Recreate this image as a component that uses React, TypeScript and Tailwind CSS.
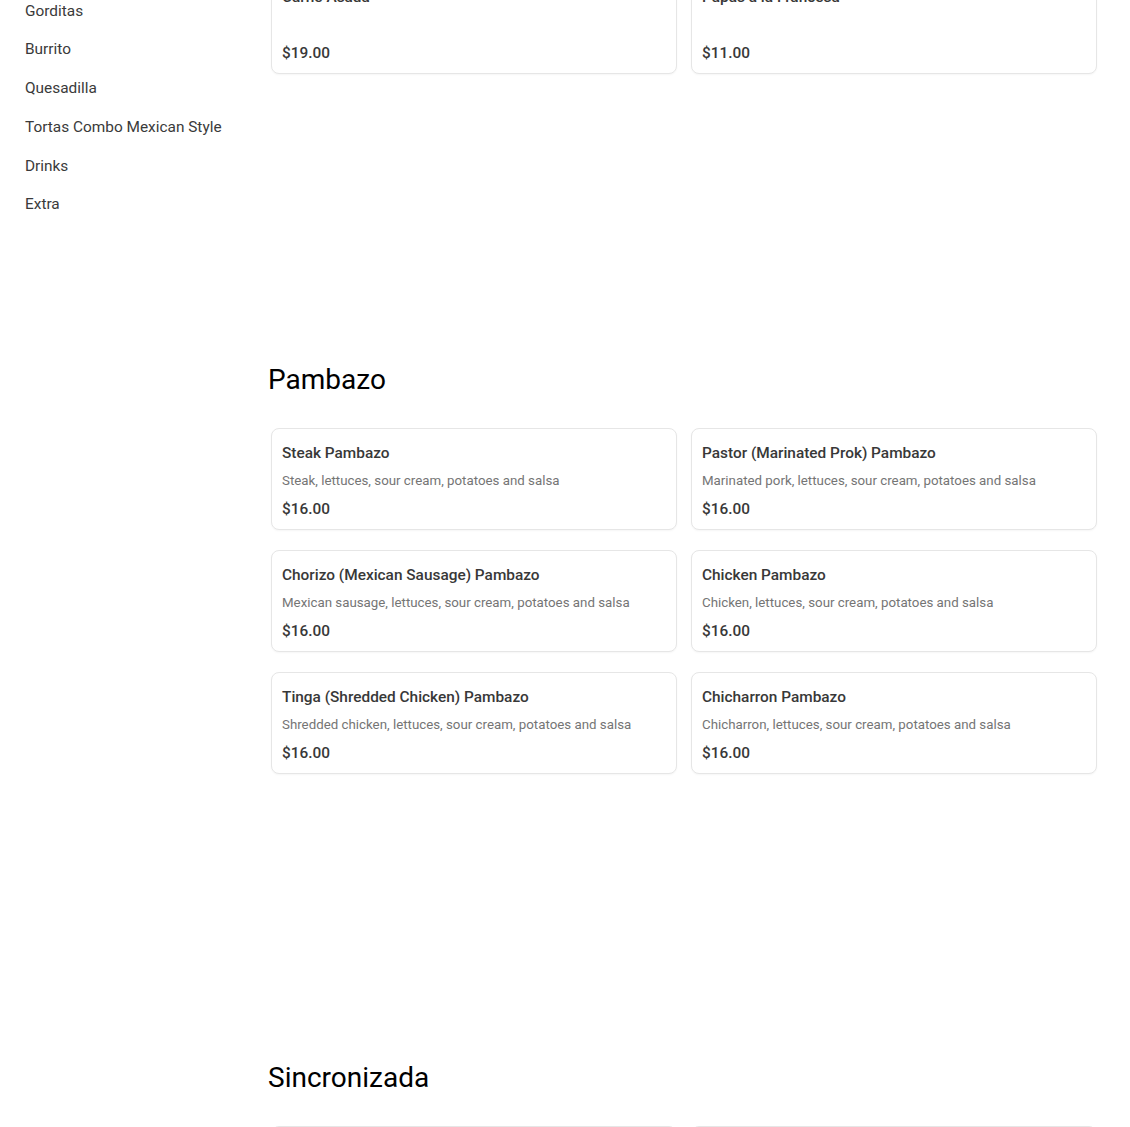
import React from 'react'

interface Item {
  name: string
  desc?: string
  price: string
}

const categories = ['Gorditas', 'Burrito', 'Quesadilla', 'Tortas Combo Mexican Style', 'Drinks', 'Extra']

const pambazo: Item[] = [
  { name: 'Steak Pambazo', desc: 'Steak, lettuces, sour cream, potatoes and salsa', price: '$16.00' },
  { name: 'Pastor (Marinated Prok) Pambazo', desc: 'Marinated pork, lettuces, sour cream, potatoes and salsa', price: '$16.00' },
  { name: 'Chorizo (Mexican Sausage) Pambazo', desc: 'Mexican sausage, lettuces, sour cream, potatoes and salsa', price: '$16.00' },
  { name: 'Chicken Pambazo', desc: 'Chicken, lettuces, sour cream, potatoes and salsa', price: '$16.00' },
  { name: 'Tinga (Shredded Chicken) Pambazo', desc: 'Shredded chicken, lettuces, sour cream, potatoes and salsa', price: '$16.00' },
  { name: 'Chicharron Pambazo', desc: 'Chicharron, lettuces, sour cream, potatoes and salsa', price: '$16.00' },
]

const prev: Item[] = [
  { name: 'Carne Asada', price: '$19.00' },
  { name: 'Papas a la Francesa', price: '$11.00' },
]

const sincronizada: Item[] = [
  { name: 'Steak Sincronizada', desc: 'Steak, cheese and flour tortilla', price: '$14.00' },
  { name: 'Chicken Sincronizada', desc: 'Chicken, cheese and flour tortilla', price: '$14.00' },
]

function Card({ item }: { item: Item }) {
  return (
    <div className="border border-[#e6e6e6] rounded-lg bg-white shadow-[0_1px_2px_rgba(0,0,0,0.04)] px-[10px] pt-[14px] pb-[10px]">
      <div className="text-[15.4px] leading-[20px] font-medium text-[#383838]">{item.name}</div>
      <div className="mt-[9px] text-[13.3px] leading-[18px] text-[#757575] h-[18px]">{item.desc}</div>
      <div className="mt-[9px] text-[15.4px] leading-[20px] font-medium text-[#383838]">{item.price}</div>
    </div>
  )
}

function Grid({ items }: { items: Item[] }) {
  return (
    <div className="grid grid-cols-2 gap-x-[14px] gap-y-[20px] pl-[3px]">
      {items.map((it, i) => <Card key={i} item={it} />)}
    </div>
  )
}

export default function App() {
  return (
    <div className="h-[1127px] overflow-hidden bg-white flex" style={{ fontFamily: 'Roboto, "Noto Sans", sans-serif' }}>
      <aside className="w-[268px] shrink-0 pl-[25px]">
        <ul className="-mt-[8px]">
          {categories.map(c => (
            <li key={c} className="h-[38.7px] flex items-center text-[15.4px] text-[#3a3a3a]">{c}</li>
          ))}
        </ul>
      </aside>
      <main className="flex-1 pr-[33px]">
        <div className="-mt-[28px]">
          <Grid items={prev} />
        </div>
        <section className="mt-[289px]">
          <h2 className="text-[28px] leading-[34px] text-black">Pambazo</h2>
          <div className="mt-[31px]">
            <Grid items={pambazo} />
          </div>
        </section>
        <section className="mt-[287px]">
          <h2 className="text-[28px] leading-[34px] text-black">Sincronizada</h2>
          <div className="mt-[31px]">
            <Grid items={sincronizada} />
          </div>
        </section>
      </main>
    </div>
  )
}
